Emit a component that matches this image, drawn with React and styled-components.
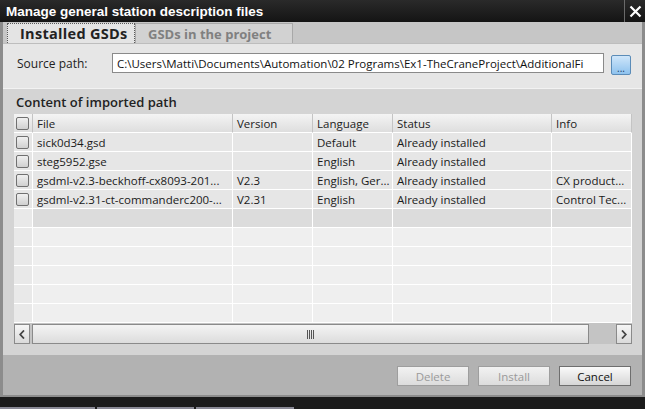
import React from 'react';
import styled, { createGlobalStyle } from 'styled-components';

const GlobalStyle = createGlobalStyle`
  html, body {
    margin: 0;
    padding: 0;
    background: #1b1b1b;
  }
  body {
    font-family: "Open Sans", "DejaVu Sans", sans-serif;
  }
`;

const rows = [
  { file: 'sick0d34.gsd', version: '', language: 'Default', status: 'Already installed', info: '' },
  { file: 'steg5952.gse', version: '', language: 'English', status: 'Already installed', info: '' },
  { file: 'gsdml-v2.3-beckhoff-cx8093-201...', version: 'V2.3', language: 'English, Ger...', status: 'Already installed', info: 'CX product...' },
  { file: 'gsdml-v2.31-ct-commanderc200-...', version: 'V2.31', language: 'English', status: 'Already installed', info: 'Control Tec...' },
];

const columns = [
  { key: 'file', label: 'File', width: 200 },
  { key: 'version', label: 'Version', width: 80 },
  { key: 'language', label: 'Language', width: 80 },
  { key: 'status', label: 'Status', width: 159 },
  { key: 'info', label: 'Info', width: 80 },
];

const EMPTY_ROWS = 6;

const Window = styled.div`
  width: 645px;
  height: 409px;
  display: flex;
  flex-direction: column;
  overflow: hidden;
`;

const TitleBar = styled.div`
  height: 22px;
  display: flex;
  align-items: center;
  background: linear-gradient(#2a2a2a, #141414);
  color: #fff;
`;

const Title = styled.div`
  flex: 1;
  padding-left: 6px;
  font-family: "Liberation Sans", Arial, sans-serif;
  font-weight: bold;
  font-size: 13.5px;
`;

const CloseButton = styled.div`
  width: 20px;
  height: 22px;
  border-left: 1px solid #6a6a6a;
  display: flex;
  align-items: center;
  justify-content: center;
`;

const Frame = styled.div`
  flex: 1;
  display: flex;
  flex-direction: column;
  border-left: 3px solid #8c8c8c;
  border-right: 3px solid #8c8c8c;
`;

const TabBar = styled.div`
  height: 21px;
  display: flex;
  align-items: flex-end;
  padding-left: 4px;
  background: #c6c6c6;
  border-bottom: 1px solid #bdbdbd;
`;

const Tab = styled.div`
  height: 20px;
  box-sizing: border-box;
  padding-left: 12px;
  width: ${(p) => p.$width}px;
  display: flex;
  align-items: center;
  white-space: nowrap;
  overflow: hidden;
  font-weight: bold;
  font-size: ${(p) => (p.$active ? 14.5 : 13)}px;
  letter-spacing: ${(p) => (p.$active ? 0.3 : 0)}px;
  color: ${(p) => (p.$active ? '#222' : '#808080')};
  background: ${(p) => (p.$active ? '#e4e4e4' : '#d2d2d2')};
  border: 1px ${(p) => (p.$active ? 'dotted #5a5a5a' : 'solid #a8a8a8')};
  border-bottom: none;
`;

const SourceRow = styled.div`
  height: 45px;
  box-sizing: border-box;
  display: flex;
  align-items: flex-start;
  padding: 9px 11px 0 14px;
  background: #e6e6e6;
  border-bottom: 1px solid #f2f2f2;
`;

const Label = styled.div`
  width: 95px;
  height: 20px;
  display: flex;
  align-items: center;
  font-size: 12px;
  color: #222;
`;

const PathInput = styled.div`
  flex: 1;
  height: 20px;
  box-sizing: border-box;
  border: 1px solid #8a8a8a;
  background: #fff;
  font-size: 11.5px;
  color: #111;
  padding: 0 4px;
  display: flex;
  align-items: center;
  white-space: nowrap;
  overflow: hidden;
`;

const BrowseButton = styled.div`
  width: 18px;
  height: 18px;
  margin: 2px 0 0 7px;
  border: 1px solid #5b8cb8;
  border-radius: 2px;
  background: linear-gradient(#cfe6fa, #8ec2ee);
  color: #1d3f66;
  font-size: 10px;
  display: flex;
  align-items: flex-end;
  justify-content: center;
  line-height: 12px;
`;

const Section = styled.div`
  height: 266px;
  display: flex;
  flex-direction: column;
  padding: 0 10px 0 11px;
  background: #d4d4d4;
`;

const SectionTitle = styled.div`
  height: 25px;
  display: flex;
  align-items: center;
  padding-left: 2px;
  font-size: 13px;
  font-weight: 600;
  color: #222;
`;

const Grid = styled.div`
  display: grid;
  grid-template-columns: 19px ${columns.map((c) => c.width + 'px').join(' ')};
  grid-auto-rows: 19px;
  background: #ffffff;
`;

const HeadCell = styled.div`
  display: flex;
  align-items: center;
  padding-left: 4px;
  font-size: 11.5px;
  color: #222;
  background: linear-gradient(#f4f4f4, #dedede);
  border-right: 1px solid #c4c4c4;
  border-bottom: 1px solid #fff;
  white-space: nowrap;
  overflow: hidden;
`;

const Cell = styled.div`
  display: flex;
  align-items: center;
  padding-left: 4px;
  font-size: 11.5px;
  color: #1a1a1a;
  background: ${(p) => p.$bg};
  border-right: 1px solid #fff;
  border-bottom: 1px solid #fff;
  white-space: nowrap;
  overflow: hidden;
`;

const CheckCell = styled(Cell)`
  padding-left: 2px;
`;

const Check = styled.div`
  width: 13px;
  height: 13px;
  box-sizing: border-box;
  border: 1px solid #707070;
  border-radius: 2px;
  background: linear-gradient(#f0f0f0, #d0d0d0);
`;

const ScrollBar = styled.div`
  height: 20px;
  display: flex;
  align-items: stretch;
  background: #c4c4c4;
  padding-top: 1px;
`;

const ScrollArrow = styled.div`
  width: 16px;
  box-sizing: border-box;
  border: 1px solid #8a8a8a;
  background: linear-gradient(#f6f6f6, #dadada);
  display: flex;
  align-items: center;
  justify-content: center;
  margin-right: ${(p) => (p.$left ? 2 : 0)}px;
`;

const Thumb = styled.div`
  width: 557px;
  box-sizing: border-box;
  border: 1px solid #8a8a8a;
  background: linear-gradient(#f4f4f4, #dcdcdc);
  display: flex;
  align-items: center;
  justify-content: center;
`;

const Track = styled.div`
  flex: 1;
`;

const Footer = styled.div`
  height: 40px;
  display: flex;
  align-items: center;
  justify-content: flex-end;
  gap: 9px;
  padding-right: 11px;
  background: #b2b2b2;
  border-bottom: 2px solid #8c8c8c;
`;

const Button = styled.div`
  width: 72px;
  height: 20px;
  box-sizing: border-box;
  margin-top: 2px;
  border: 1px solid ${(p) => (p.$disabled ? '#9e9e9e' : '#6e6e6e')};
  background: ${(p) =>
    p.$disabled ? 'linear-gradient(#f2f2f2, #dcdcdc)' : 'linear-gradient(#fafafa, #d6d6d6)'};
  color: ${(p) => (p.$disabled ? '#9a9a9a' : '#111')};
  font-size: 11.5px;
  display: flex;
  align-items: center;
  justify-content: center;
`;

const BottomBar = styled.div`
  height: 12px;
  display: flex;
  align-items: flex-end;
  background: #1b1b1b;
`;

const TaskSlot = styled.div`
  width: ${(p) => p.$width}px;
  height: 2px;
  margin-right: 2px;
  background: #8a8a96;
`;

function Grip() {
  return (
    <svg width="7" height="9" viewBox="0 0 7 9">
      {[0, 2, 4, 6].map((x) => (
        <rect key={x} x={x} y="0" width="1" height="9" fill="#555" />
      ))}
    </svg>
  );
}

function Arrow({ dir }) {
  return (
    <svg width="6" height="9" viewBox="0 0 6 9">
      <path
        d={dir === 'left' ? 'M5 0.5 L1.2 4.5 L5 8.5' : 'M1 0.5 L4.8 4.5 L1 8.5'}
        fill="none"
        stroke="#444"
        strokeWidth="1.8"
      />
    </svg>
  );
}

export default function App() {
  const emptyRows = Array.from({ length: EMPTY_ROWS });
  return (
    <Window>
      <GlobalStyle />
      <TitleBar>
        <Title>Manage general station description files</Title>
        <CloseButton>
          <svg width="13" height="13" viewBox="0 0 13 13">
            <path d="M1.5 1.5 L11.5 11.5 M11.5 1.5 L1.5 11.5" stroke="#fff" strokeWidth="2.2" />
          </svg>
        </CloseButton>
      </TitleBar>
      <Frame>
        <TabBar>
          <Tab $active $width={128}>Installed GSDs</Tab>
          <Tab $width={158}>GSDs in the project</Tab>
        </TabBar>
        <SourceRow>
          <Label>Source path:</Label>
          <PathInput>
            C:\Users\Matti\Documents\Automation\02 Programs\Ex1-TheCraneProject\AdditionalFi
          </PathInput>
          <BrowseButton>...</BrowseButton>
        </SourceRow>
        <Section>
          <SectionTitle>Content of imported path</SectionTitle>
          <Grid>
            <HeadCell style={{ paddingLeft: 2 }}>
              <Check />
            </HeadCell>
            {columns.map((c) => (
              <HeadCell key={c.key}>{c.label}</HeadCell>
            ))}
            {rows.map((r, i) => (
              <React.Fragment key={i}>
                <CheckCell $bg="#e6e6e6">
                  <Check />
                </CheckCell>
                {columns.map((c) => (
                  <Cell key={c.key} $bg="#e6e6e6">
                    {r[c.key]}
                  </Cell>
                ))}
              </React.Fragment>
            ))}
            {emptyRows.map((_, i) => (
              <React.Fragment key={'e' + i}>
                <Cell $bg="#e9e9e9" />
                {columns.map((c) => (
                  <Cell key={c.key} $bg={i === 0 ? '#dcdcdc' : '#efefef'} />
                ))}
              </React.Fragment>
            ))}
          </Grid>
          <ScrollBar>
            <ScrollArrow $left>
              <Arrow dir="left" />
            </ScrollArrow>
            <Thumb>
              <Grip />
            </Thumb>
            <Track />
            <ScrollArrow>
              <Arrow dir="right" />
            </ScrollArrow>
          </ScrollBar>
        </Section>
        <Footer>
          <Button $disabled>Delete</Button>
          <Button $disabled>Install</Button>
          <Button>Cancel</Button>
        </Footer>
      </Frame>
      <BottomBar>
        <TaskSlot $width={95} />
        <TaskSlot $width={97} />
        <TaskSlot $width={98} />
      </BottomBar>
    </Window>
  );
}
